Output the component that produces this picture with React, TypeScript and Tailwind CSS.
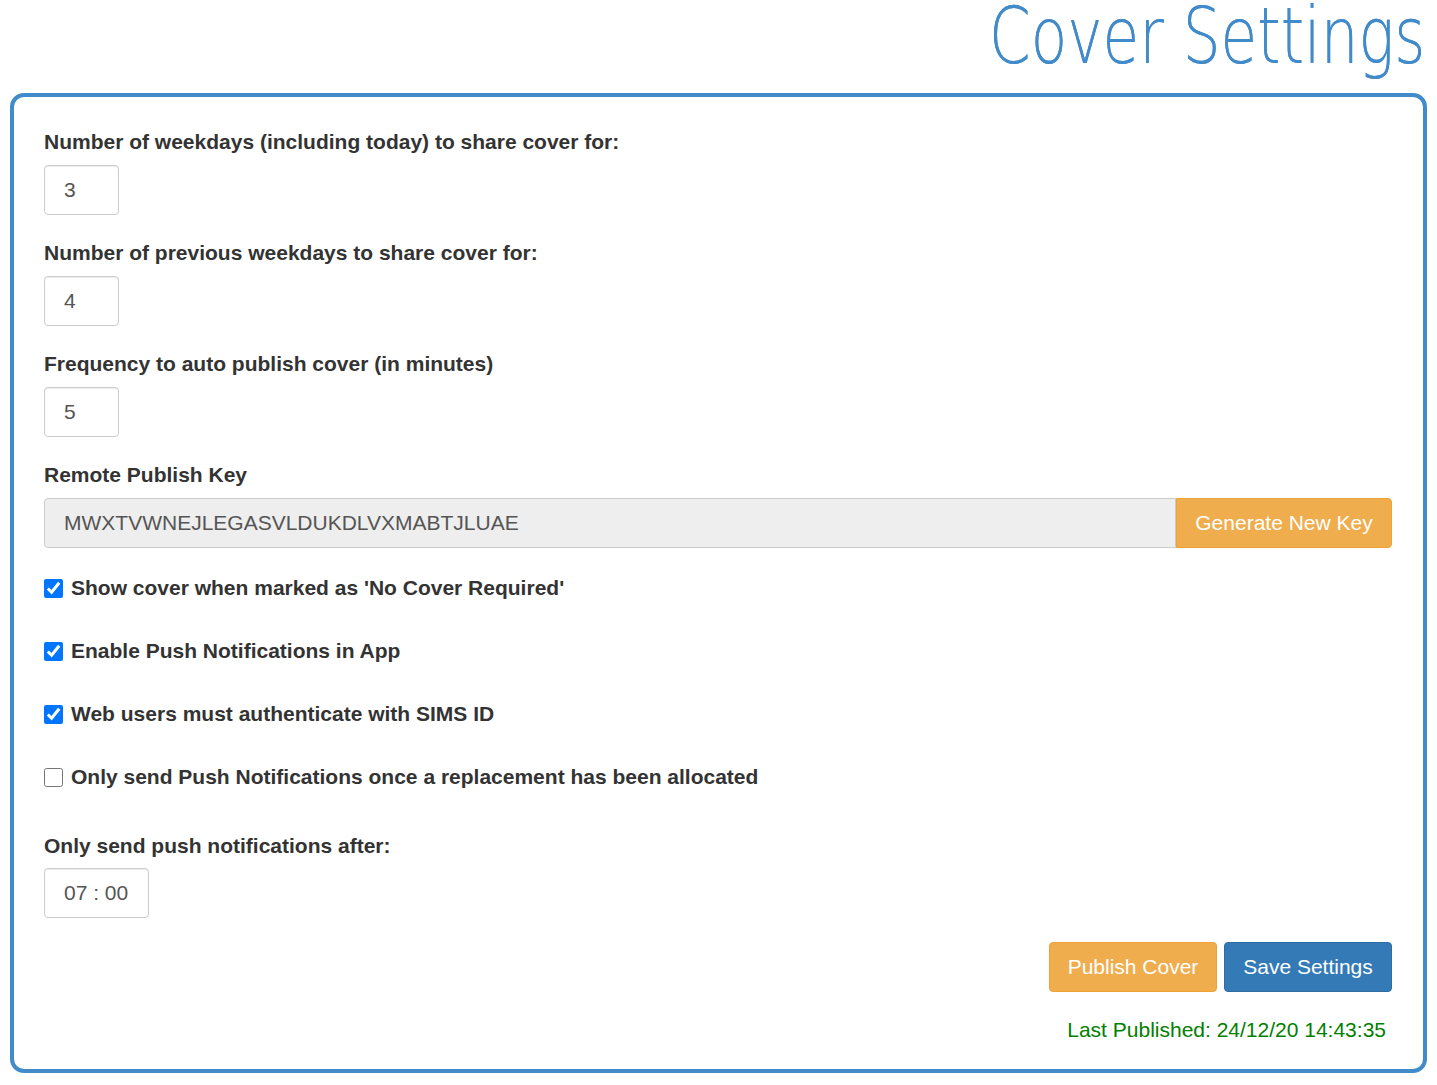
import { useState } from 'react';

const label = "block text-[21px] font-bold text-[#333] leading-[22px]";
const smallInput =
  "h-[50px] rounded-[4px] border border-[#ccc] bg-white px-[19px] text-[21px] text-[#555] shadow-[inset_0_1px_1px_rgba(0,0,0,0.075)] outline-none";

function Check({ checked, text }: { checked: boolean; text: string }) {
  const [on, setOn] = useState(checked);
  return (
    <label className="flex items-center gap-[8px] h-[26px]">
      <input
        type="checkbox"
        checked={on}
        onChange={() => setOn(!on)}
        className="m-0 w-[19px] h-[19px] accent-[#0075ff]"
      />
      <span className="text-[21px] font-bold text-[#333]">{text}</span>
    </label>
  );
}

export default function App() {
  const [days, setDays] = useState('3');
  const [prev, setPrev] = useState('4');
  const [freq, setFreq] = useState('5');

  return (
    <div className="w-[1437px] h-[1085px] bg-white font-['Liberation_Sans',Arial,sans-serif]">
      <div className="flex justify-end pr-[12px] h-[93px]">
        <h1 className="font-['DejaVu_Sans',sans-serif] font-extralight text-[78px] leading-[80px] -mt-[4px] text-[#428bca] origin-right scale-x-[0.765] whitespace-nowrap [text-shadow:0_0_0.6px_#428bca]">
          Cover Settings
        </h1>
      </div>

      <div className="mx-[10px] h-[980px] rounded-[14px] border-[4px] border-[#428bca] pl-[30px] pr-[31px] pt-[34px]">
        <div className="flex flex-col">
          <span className={label}>Number of weekdays (including today) to share cover for:</span>
          <input className={`${smallInput} w-[75px] mt-[12px]`} value={days} onChange={(e) => setDays(e.target.value)} />

          <span className={`${label} mt-[27px]`}>Number of previous weekdays to share cover for:</span>
          <input className={`${smallInput} w-[75px] mt-[12px]`} value={prev} onChange={(e) => setPrev(e.target.value)} />

          <span className={`${label} mt-[27px]`}>Frequency to auto publish cover (in minutes)</span>
          <input className={`${smallInput} w-[75px] mt-[12px]`} value={freq} onChange={(e) => setFreq(e.target.value)} />

          <span className={`${label} mt-[27px]`}>Remote Publish Key</span>
          <div className="flex mt-[12px]">
            <input
              readOnly
              value="MWXTVWNEJLEGASVLDUKDLVXMABTJLUAE"
              className="flex-1 h-[50px] rounded-l-[4px] border border-[#ccc] bg-[#eee] px-[19px] text-[21px] text-[#555] outline-none"
            />
            <button className="h-[50px] w-[216px] rounded-r-[4px] border border-[#eea236] bg-[#f0ad4e] text-[21px] text-white">
              Generate New Key
            </button>
          </div>

          <div className="flex flex-col gap-[37px] mt-[27px]">
            <Check checked text="Show cover when marked as 'No Cover Required'" />
            <Check checked text="Enable Push Notifications in App" />
            <Check checked text="Web users must authenticate with SIMS ID" />
            <Check checked={false} text="Only send Push Notifications once a replacement has been allocated" />
          </div>

          <span className={`${label} mt-[45px]`}>Only send push notifications after:</span>
          <div className={`${smallInput} w-[105px] mt-[11px] flex items-center`}>07 : 00</div>

          <div className="flex justify-end gap-[7px] mt-[24px]">
            <button className="h-[50px] w-[168px] rounded-[4px] border border-[#eea236] bg-[#f0ad4e] text-[21px] text-white">
              Publish Cover
            </button>
            <button className="h-[50px] w-[168px] rounded-[4px] border border-[#2e6da4] bg-[#337ab7] text-[21px] text-white">
              Save Settings
            </button>
          </div>

          <div className="flex justify-end mt-[25px] pr-[6px]">
            <span className="text-[21px] leading-[26px] text-[#008000]">Last Published: 24/12/20 14:43:35</span>
          </div>
        </div>
      </div>
    </div>
  );
}
